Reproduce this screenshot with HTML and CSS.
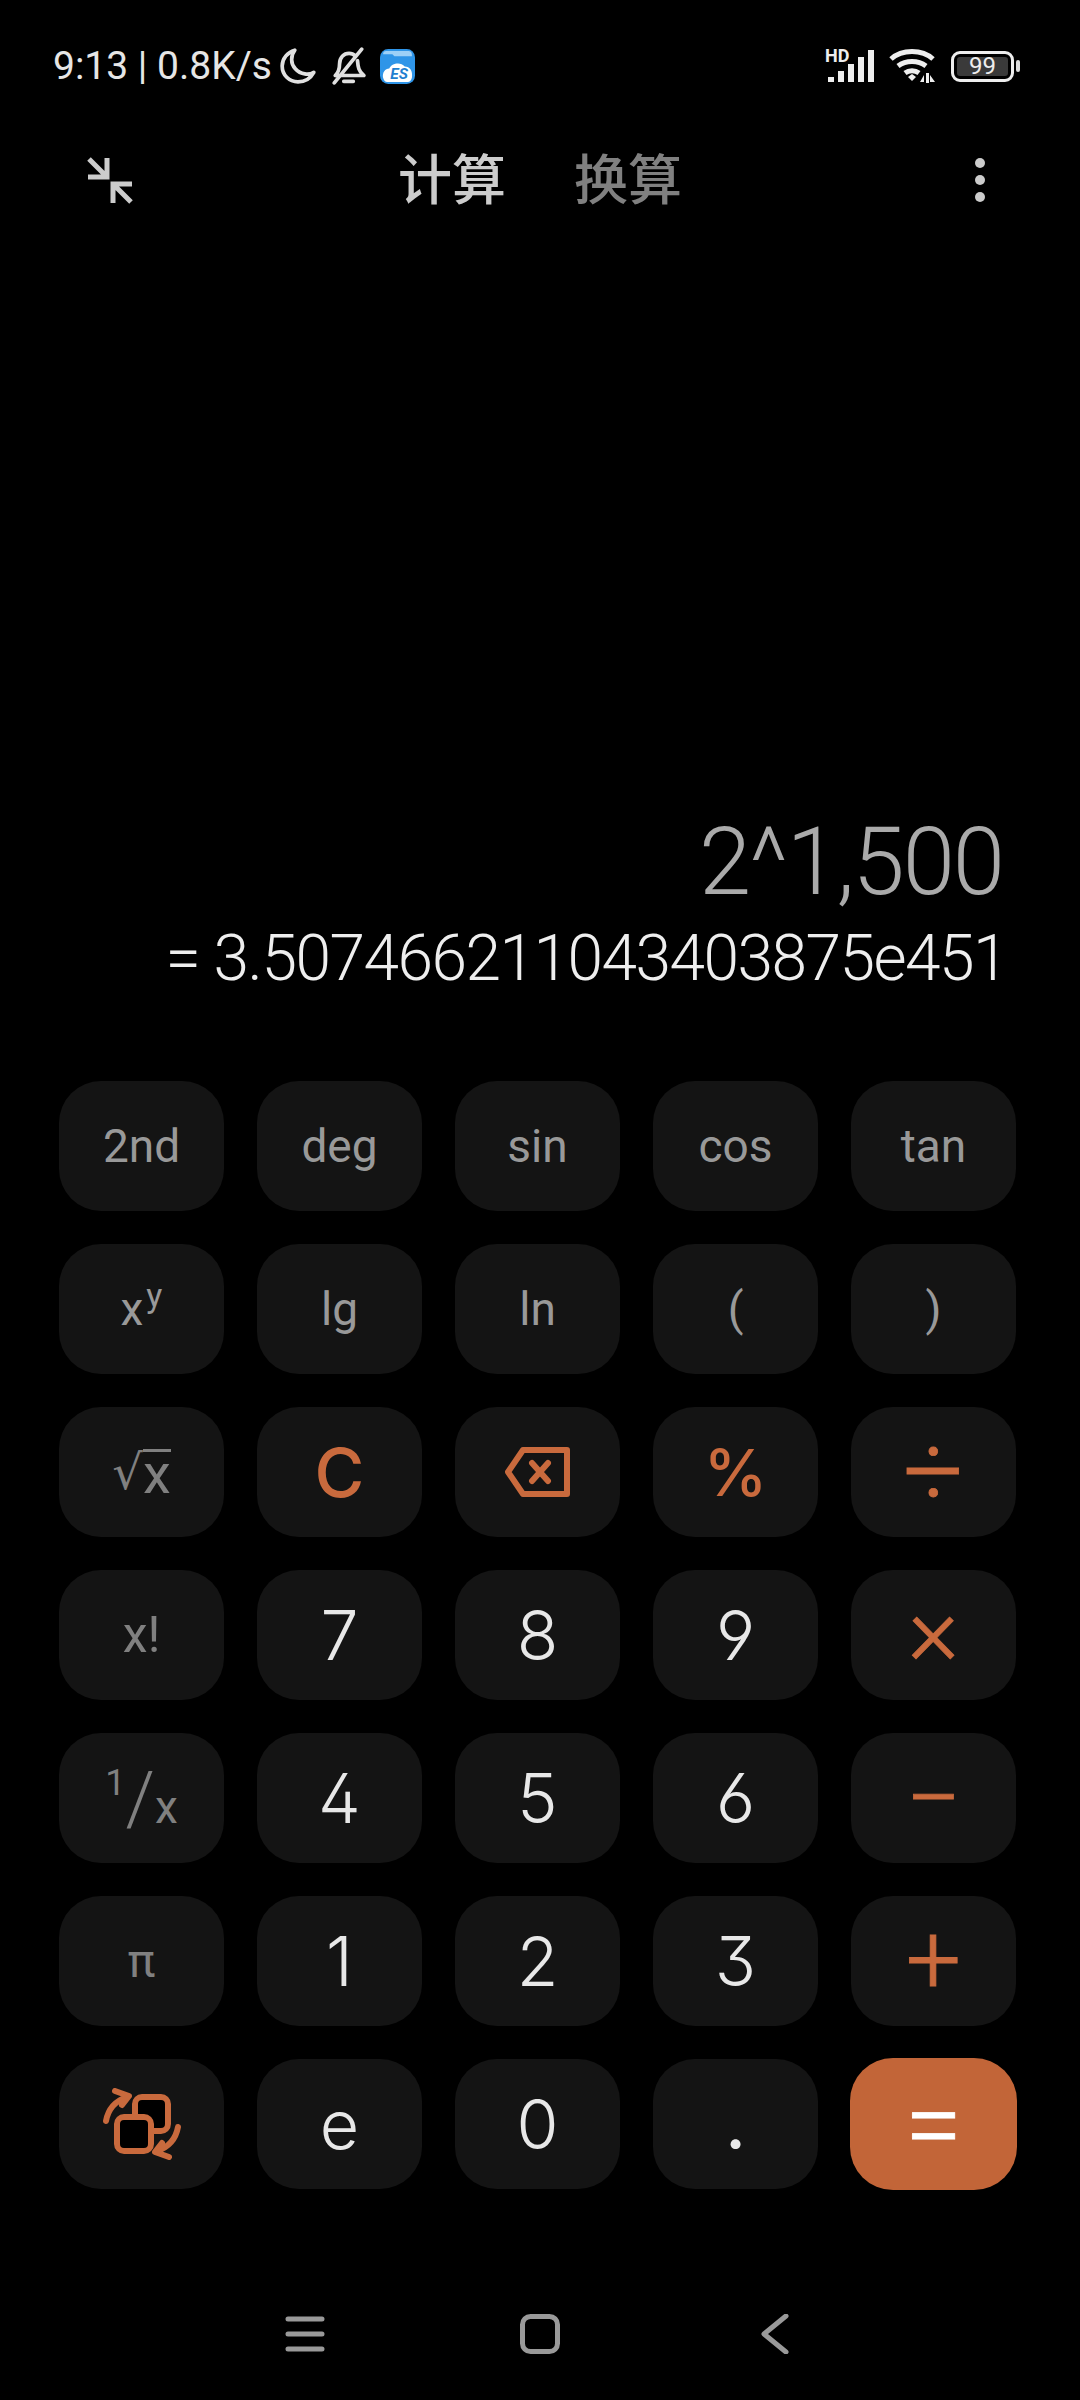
FILE: index.html
```html
<!DOCTYPE html>
<html lang="en">

<head>
  <meta charset="UTF-8">
  <meta name="viewport" content="width=device-width, initial-scale=1.0">
  <title>Calculator</title>
  <link rel="stylesheet" href="styles.css">
</head>

<body>

  <div class="status">
    <span class="status-text">9:13 | 0.8K/s</span>
    <svg class="ic-moon" viewBox="0 0 36 36"><path d="M15 3C8 5 3 11 3 18c0 8.500 6.500 15 15 15 6.500 0 12-3.500 15-9-2.500 1.500-5.500 2-8.500 1.500C17 24.500 12 18 12 12c0-3.500 1-6.500 3-9z" /></svg>
    <svg class="ic-bell" viewBox="0 0 36 36"><path d="M6 27c3-3 4-6 4-11 0-6 4-10 9-10 2.500 0 4.500 1 6 2.500M27 13c.5 6 1 10 6 14H6M14 32.500h9M5 34 31 2" /></svg>
    <svg class="ic-es" viewBox="0 0 34 34">
      <rect width="34" height="34" rx="8" fill="#2f95e8" />
      <path d="M3 5c0-2 1-3 3-3h21c3 0 4 1 4 4v1H14l-2-2z" fill="#9dd0f7" />
      <path d="M3 28c-1-5 2-9 6-9 2-5 11-7 15-2 5 0 8 4 7 11-1 3-2 4-4 4H7c-2 0-3-1-4-4z" fill="#fff" />
      <text x="10" y="29" class="es-text">ES</text>
    </svg>
    <span class="spacer"></span>
    <div class="signal">
      <span class="hd">HD</span>
      <svg viewBox="0 0 52 32"><path d="M3 27h6v5H3zM13 21h6v11h-6zM23 14h6v18h-6zM33 7h6v25h-6zM43 0h6v32h-6z" /></svg>
    </div>
    <svg class="ic-wifi" viewBox="0 0 46 34">
      <path class="wave" d="M2 10C13 0 33 0 44 10M9 17c8-6 20-6 28 0M16 24c4-3 10-3 14 0" />
      <path d="M19 28l4-3 4 3-4 4zM31 33l4-7v7zM37 24h3v10h-3zM41 26l5 7h-5z" />
    </svg>
    <div class="battery">
      <div class="battery-body"><span class="battery-fill">99</span></div>
      <span class="battery-tip"></span>
    </div>
  </div>

  <div class="toolbar">
    <svg class="ic-shrink" viewBox="0 0 48 48"><path d="M3 3l18 18M21 2v19H2M45 46L27 28M27 47V28h19" /></svg>
    <div class="tabs">
      <span class="tab on">计算</span>
      <span class="tab">换算</span>
    </div>
    <div class="more"><span></span><span></span><span></span></div>
  </div>

  <div class="display">
    <div class="expr">2^1,500</div>
    <div class="result">= 3.507466211043403875e451</div>
  </div>

  <div class="keypad">
    <div class="key fn">2nd</div>
    <div class="key fn">deg</div>
    <div class="key fn">sin</div>
    <div class="key fn">cos</div>
    <div class="key fn">tan</div>

    <div class="key fn">x<sup class="pow">y</sup></div>
    <div class="key fn">lg</div>
    <div class="key fn">ln</div>
    <div class="key fn">(</div>
    <div class="key fn">)</div>

    <div class="key fn dim"><span class="root">√</span><span class="root-x">x</span></div>
    <div class="key op clear">C</div>
    <div class="key op">
      <svg class="ic-back" viewBox="0 0 66 50"><path d="M18 3h44v44H18L3 25zM27 16l16 18M43 16L27 34" /></svg>
    </div>
    <div class="key op pct">%</div>
    <div class="key op sign div">÷</div>

    <div class="key fn dim fact">x!</div>
    <div class="key num">7</div>
    <div class="key num">8</div>
    <div class="key num">9</div>
    <div class="key op sign mul">×</div>

    <div class="key fn dim inv"><span class="inv-one">1</span><span class="inv-bar">/</span><span class="inv-x">x</span></div>
    <div class="key num">4</div>
    <div class="key num">5</div>
    <div class="key num">6</div>
    <div class="key op sign">−</div>

    <div class="key fn dim">π</div>
    <div class="key num">1</div>
    <div class="key num">2</div>
    <div class="key num">3</div>
    <div class="key op sign plus">+</div>

    <div class="key op">
      <svg class="ic-swap" viewBox="0 0 80 72">
        <rect x="33" y="9" width="33" height="34" rx="7" />
        <rect x="15" y="29" width="34" height="34" rx="7" />
        <path d="M4 33C6 22 13 13 25 9M13 3l14 5-7 9M76 39c-2 11-9 20-21 24M67 69l-14-5 7-9" />
      </svg>
    </div>
    <div class="key num">e</div>
    <div class="key num">0</div>
    <div class="key num dot">.</div>
    <div class="key equal">=</div>
  </div>

  <div class="navbar">
    <svg class="ic-nav" viewBox="0 0 40 40"><path d="M3 5h34M3 20h34M3 35h34" /></svg>
    <svg class="ic-nav" viewBox="0 0 40 40"><rect x="2.500" y="2.500" width="35" height="35" rx="8" /></svg>
    <svg class="ic-nav" viewBox="0 0 40 40"><path d="M31 2L9 20l22 18" /></svg>
  </div>

</body>

</html>
```

FILE: styles.css
```css
* {
  margin: 0;
  padding: 0;
  box-sizing: border-box;
}

body {
  width: 1080px;
  height: 2400px;
  background: #000;
  display: flex;
  flex-direction: column;
  font-family: "Roboto", "Noto Sans CJK SC", sans-serif;
  overflow: hidden;
}

/* status bar */
.status {
  height: 106px;
  padding: 26px 60px 0 53px;
  display: flex;
  align-items: center;
  color: #e6e6e6;
}

.status-text {
  font-size: 39px;
  white-space: nowrap;
  width: 226px;
}

.spacer {
  flex: 1;
}

.ic-moon,
.ic-bell {
  width: 38px;
  height: 38px;
  fill: none;
  stroke: #e0e0e0;
  stroke-width: 3.500;
  stroke-linejoin: round;
  stroke-linecap: round;
}

.ic-bell {
  margin-left: 12px;
}

.ic-es {
  width: 35px;
  height: 35px;
  margin-left: 13px;
}

.es-text {
  font-size: 15px;
  font-weight: 700;
  font-style: italic;
  fill: #1f7fd0;
}

.signal {
  position: relative;
  width: 52px;
  height: 32px;
}

.signal svg {
  display: block;
  width: 52px;
  height: 32px;
  fill: #eee;
}

.hd {
  position: absolute;
  left: 0;
  top: -3px;
  font-size: 18px;
  font-weight: 700;
  line-height: 18px;
  color: #eee;
}

.ic-wifi {
  width: 46px;
  height: 34px;
  margin-left: 12px;
  fill: #eee;
}

.ic-wifi .wave {
  fill: none;
  stroke: #eee;
  stroke-width: 5;
}

.battery {
  display: flex;
  align-items: center;
  margin-left: 16px;
}

.battery-body {
  width: 63px;
  height: 31px;
  border: 3px solid #eee;
  border-radius: 9px;
  padding: 3px;
  display: flex;
}

.battery-fill {
  flex: 1;
  background: #3a3a3a;
  border-radius: 3px;
  color: #eee;
  font-size: 24px;
  line-height: 19px;
  text-align: center;
}

.battery-tip {
  width: 4px;
  height: 12px;
  margin-left: 2px;
  background: #ddd;
  border-radius: 2px;
}

/* top bar */
.toolbar {
  height: 148px;
  padding: 0 86px;
  display: grid;
  grid-template-columns: 1fr auto 1fr;
  align-items: center;
}

.ic-shrink {
  width: 48px;
  height: 48px;
  fill: none;
  stroke: #ccc;
  stroke-width: 5;
}

.tabs {
  display: flex;
  gap: 68px;
  padding-top: 4px;
}

.tab {
  font-size: 54px;
  font-weight: 500;
  line-height: 60px;
  color: #808080;
}

.tab.on {
  color: #ccc;
}

.more {
  justify-self: end;
  margin-right: 9px;
  display: flex;
  flex-direction: column;
  gap: 7px;
}

.more span {
  width: 10px;
  height: 10px;
  border-radius: 50%;
  background: #ccc;
}

/* display */
.display {
  flex: 1;
  padding: 0 76px 86px 0;
  display: flex;
  flex-direction: column;
  align-items: flex-end;
  justify-content: flex-end;
  font-weight: 300;
  white-space: nowrap;
}

.expr {
  font-size: 94px;
  line-height: 108px;
  margin: 0 1px 7px 0;
  letter-spacing: -2px;
  color: #aaa;
}

.result {
  font-size: 64px;
  line-height: 72px;
  margin-right: -3px;
  letter-spacing: -1.500px;
  color: #eee;
}

/* keys */
.keypad {
  padding-left: 59px;
  display: grid;
  grid-template-columns: repeat(5, 165px);
  grid-auto-rows: 130px;
  gap: 33px;
}

.key {
  background: #141414;
  border-radius: 42px;
  display: flex;
  align-items: center;
  justify-content: center;
}

.fn {
  font-size: 46px;
  color: #999;
}

.fn.dim {
  color: #808080;
}

.fact {
  font-size: 50px;
}

.pow {
  font-size: 34px;
  line-height: 1;
  margin: -28px 0 0 3px;
}

.root {
  font-family: "DejaVu Sans", sans-serif;
  font-size: 48px;
}

.root-x {
  border-top: 3px solid #808080;
  font-size: 56px;
  line-height: 44px;
}

.inv-one {
  font-size: 36px;
  margin-top: -30px;
}

.inv-bar {
  font-size: 74px;
  font-weight: 300;
}

.inv-x {
  margin-top: 18px;
  font-size: 46px;
}

.num {
  font-family: "Inter", sans-serif;
  font-feature-settings: "cv03", "cv04", "ss01";
  font-size: 68px;
  font-weight: 300;
  color: #e8e8e8;
}

.dot {
  font-weight: 500;
}

.op {
  color: #c96a3d;
}

.clear {
  font-family: "Inter", sans-serif;
  font-size: 68px;
  font-weight: 500;
}

.pct {
  font-family: "Inter", sans-serif;
  font-size: 64px;
  font-weight: 500;
}

.sign {
  font-size: 98px;
  font-weight: 300;
  -webkit-text-stroke: 0.8px #c96a3d;
}

.sign.div {
  font-size: 106px;
}

.sign.mul {
  padding-bottom: 9px;
}

.sign.plus {
  padding-bottom: 3px;
}

.equal {
  background: #c26538;
  color: #fff;
  font-size: 104px;
  font-weight: 300;
  -webkit-text-stroke: 0.8px #fff;
  width: 167px;
  height: 132px;
  margin: -1px 0 0 -1px;
  border-radius: 43px;
}

.ic-back {
  width: 66px;
  height: 50px;
  fill: none;
  stroke: #c96a3d;
  stroke-width: 6;
  stroke-linejoin: round;
  stroke-linecap: round;
}

.ic-swap {
  width: 80px;
  height: 72px;
  fill: #000;
  stroke: #c96a3d;
  stroke-width: 6;
  stroke-linejoin: round;
  stroke-linecap: round;
}

.ic-swap path {
  fill: none;
}

/* nav bar */
.navbar {
  height: 211px;
  padding-bottom: 46px;
  display: grid;
  grid-template-columns: repeat(3, 235px);
  justify-content: center;
  justify-items: center;
  align-items: end;
}

.ic-nav {
  width: 40px;
  height: 40px;
  fill: none;
  stroke: #999;
  stroke-width: 5;
  stroke-linecap: round;
  stroke-linejoin: round;
}
```
